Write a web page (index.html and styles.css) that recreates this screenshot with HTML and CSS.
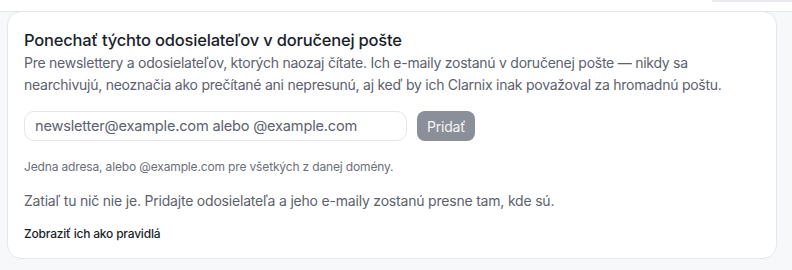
FILE: index.html
```html
<!DOCTYPE html>
<html lang="sk">
<head>
<meta charset="utf-8">
<link rel="stylesheet" href="styles.css">
</head>
<body>
<div class="topbar"><span class="topbar-tab"></span></div>
<main class="page">
  <section class="card">
    <h2 class="title">Ponechať týchto odosielateľov v doručenej pošte</h2>
    <p class="desc">Pre newslettery a odosielateľov, ktorých naozaj čítate. Ich e-maily zostanú v doručenej pošte — nikdy sa nearchivujú, neoznačia ako prečítané ani nepresunú, aj keď by ich Clarnix inak považoval za hromadnú poštu.</p>
    <form class="add-row">
      <input class="field" type="text" placeholder="newsletter@example.com alebo @example.com">
      <button class="btn" type="button">Pridať</button>
    </form>
    <p class="hint">Jedna adresa, alebo @example.com pre všetkých z danej domény.</p>
    <p class="empty">Zatiaľ tu nič nie je. Pridajte odosielateľa a jeho e-maily zostanú presne tam, kde sú.</p>
    <a class="link" href="#">Zobraziť ich ako pravidlá</a>
  </section>
</main>
</body>
</html>
```
FILE: styles.css
```css
* { box-sizing: border-box; }
html, body { margin: 0; padding: 0; }
body {
  background: #f7f8fa;
  font-family: "Inter", "Noto Sans", sans-serif;
  color: #1b1e2b;
  width: 792px;
  height: 270px;
  overflow: hidden;
}
.topbar {
  height: 12px;
  background: #ffffff;
  border-bottom: 1px solid #e6e8ec;
  display: flex;
  justify-content: flex-end;
}
.topbar-tab {
  width: 80px;
  height: 2px;
  background: #e9ebf0;
}
.page {
  padding: 0 15px 0 7px;
  margin-top: -1px;
}
.card {
  background: #ffffff;
  border: 1px solid #e4e6ea;
  border-radius: 14px;
  height: 248px;
  padding: 16px 16px 0 16px;
}
.title {
  margin: 0;
  font-size: 16.5px;
  line-height: 24px;
  font-weight: 500;
  color: #1b1e2b;
  letter-spacing: -0.2px;
}
.desc {
  margin: 0;
  font-size: 14px;
  line-height: 22px;
  color: #5d616d;
  letter-spacing: -0.25px;
}
.add-row {
  display: flex;
  gap: 10px;
  margin-top: 15px;
  align-items: center;
}
.field {
  width: 383px;
  height: 30px;
  border: 1px solid #e4e6ea;
  border-radius: 10px;
  padding: 0 10px;
  font-family: inherit;
  font-size: 14.6px;
  letter-spacing: -0.2px;
  color: #1b1e2b;
  background: #fff;
  outline: none;
}
.field::placeholder { color: #5d616d; }
.btn {
  height: 30px;
  padding: 0 10px;
  border: none;
  border-radius: 8px;
  background: #8b8f99;
  color: #f4f5f7;
  font-family: inherit;
  font-size: 14px;
  letter-spacing: -0.2px;
}
.hint {
  margin: 17px 0 0;
  font-size: 12px;
  line-height: 18px;
  color: #6a6e79;
  letter-spacing: -0.15px;
}
.empty {
  margin: 14px 0 0;
  font-size: 14px;
  line-height: 22px;
  color: #5d616d;
  letter-spacing: -0.2px;
}
.link {
  display: inline-block;
  margin-top: 13px;
  font-size: 12px;
  line-height: 18px;
  font-weight: 500;
  color: #1b1e2b;
  text-decoration: none;
  letter-spacing: -0.2px;
}
```
